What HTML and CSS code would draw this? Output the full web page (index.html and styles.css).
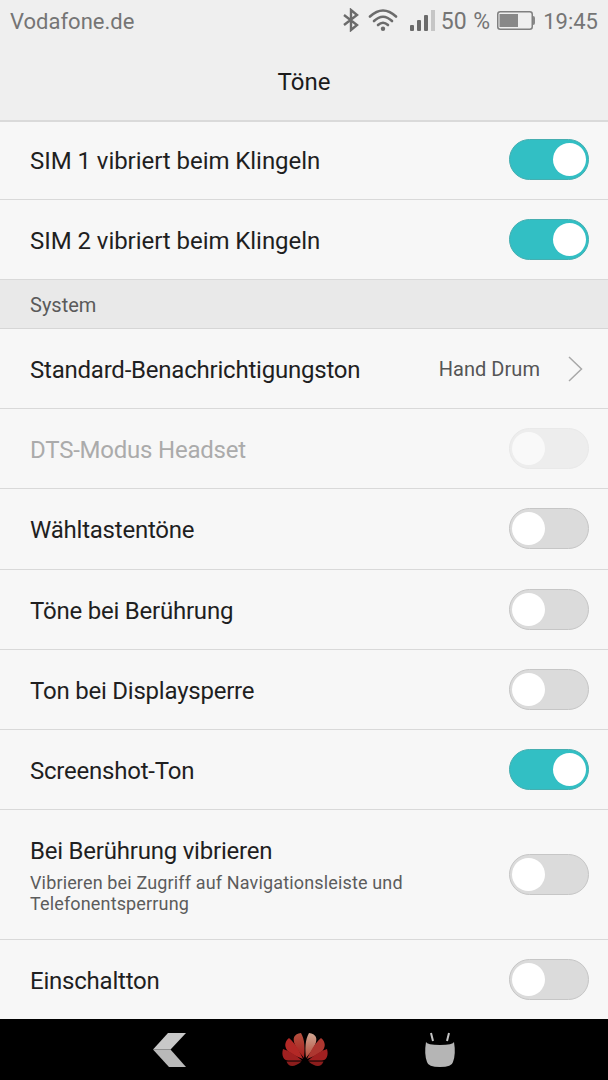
FILE: index.html
```html
<!DOCTYPE html>
<html lang="de">

<head>
    <meta charset="UTF-8">
    <title>Töne</title>
    <link rel="stylesheet" href="styles.css">
</head>

<body>
    <div id="phone">
        <div id="status">
            <span class="carrier">Vodafone.de</span>
            <svg class="bluetooth" width="18" height="24" viewBox="0 0 18 24">
                <path d="M2 7 L15 17 L9 22 V2 L15 7 L2 17" />
            </svg>
            <svg class="wifi" width="30" height="24" viewBox="0 0 30 24">
                <path d="M2 8.5 Q15 -3.5 28 8.5" />
                <path d="M6 13 Q15 4.5 24 13" />
                <path d="M10 17 Q15 12.5 20 17" />
                <circle cx="15" cy="20.7" r="2.2" />
            </svg>
            <svg class="signal" width="26" height="24" viewBox="0 0 26 24">
                <rect x="0" y="17" width="4" height="6" rx="1" />
                <rect x="7" y="12" width="4" height="11" rx="1" />
                <rect x="14" y="7" width="4" height="16" rx="1" />
                <rect class="weak" x="21" y="2" width="4" height="21" />
            </svg>
            <span class="percent">50 %</span>
            <svg class="battery" width="38" height="19" viewBox="0 0 38 19">
                <rect class="frame" x="0.75" y="0.75" width="34.5" height="17.5" rx="2.5" />
                <rect x="2.5" y="3" width="18.5" height="13" />
                <path d="M36 5 q2 0 2 2 v5 q0 2 -2 2z" />
            </svg>
            <span class="clock">19:45</span>
        </div>
        <div id="title">
            <h1>Töne</h1>
        </div>
        <ul id="list">
            <li class="row sim first"><span class="label">SIM 1 vibriert beim Klingeln</span><i class="switch on"></i></li>
            <li class="row sim"><span class="label">SIM 2 vibriert beim Klingeln</span><i class="switch on"></i></li>
            <li class="section">System</li>
            <li class="row">
                <span class="label">Standard-Benachrichtigungston</span>
                <span class="value">Hand Drum</span>
                <svg class="arrow" width="15" height="26" viewBox="0 0 15 26">
                    <path d="M1 1 L13.5 13 L1 25" />
                </svg>
            </li>
            <li class="row disabled"><span class="label">DTS-Modus Headset</span><i class="switch"></i></li>
            <li class="row tall"><span class="label">Wähltastentöne</span><i class="switch"></i></li>
            <li class="row"><span class="label">Töne bei Berührung</span><i class="switch"></i></li>
            <li class="row"><span class="label">Ton bei Displaysperre</span><i class="switch"></i></li>
            <li class="row"><span class="label">Screenshot-Ton</span><i class="switch on"></i></li>
            <li class="row double">
                <div class="label">
                    <div>Bei Berührung vibrieren</div>
                    <p>Vibrieren bei Zugriff auf Navigationsleiste und Telefonentsperrung</p>
                </div>
                <i class="switch"></i>
            </li>
            <li class="row last"><span class="label">Einschaltton</span><i class="switch"></i></li>
        </ul>
        <div id="nav">
            <svg width="36" height="36" viewBox="0 0 36 36">
                <path fill="#c8c8c8" d="M1 17.5 L16 1 H34 L18.500 17.500z" />
                <path fill="#b9b9b9" d="M1 17.500 H18.500 L34 35 H17z" />
            </svg>
            <svg class="home" width="48" height="36" viewBox="0 0 48 36">
                <defs>
                    <linearGradient id="red" x1="0" y1="0" x2="0" y2="1">
                        <stop offset="0" stop-color="#b5513f" />
                        <stop offset="1" stop-color="#a81c1c" />
                    </linearGradient>
                    <linearGradient id="light" x1="0" y1="0" x2="0" y2="1">
                        <stop offset="0" stop-color="#d0a692" />
                        <stop offset="1" stop-color="#b54d3c" />
                    </linearGradient>
                </defs>
                <path fill="url(#red)" d="M23 26 C24 17 24 8 20 1 C13 2 11 6 14 13 C16 18 20 22 23 26z" />
                <path fill="url(#light)" d="M25 26 C24 17 24 8 28 1 C35 2 37 6 34 13 C32 18 28 22 25 26z" />
                <path fill="#b32926" d="M22 27 C18 18 14 11 8 6 C3 10 3 16 8 20 C12 23 17 25 22 27z" />
                <path fill="#ad3730" d="M26 27 C30 18 34 11 40 6 C45 10 45 16 40 20 C36 23 31 25 26 27z" />
                <path fill="#a02020" d="M21 28.500 C15 23 8 19 2 17 C0 24 3 29 8 28.500z" />
                <path fill="#a02020" d="M27 28.500 C33 23 40 19 46 17 C48 24 45 29 40 28.500z" />
                <path fill="#8c1d1c" d="M20.500 29.500 H5.500 C8 36 14 35 20.500 29.500z" />
                <path fill="#8c1d1c" d="M27.500 29.500 H42.500 C40 36 34 35 27.500 29.500z" />
            </svg>
            <svg width="32" height="38" viewBox="0 0 32 38">
                <path stroke="#c4c4c4" stroke-width="2" d="M7 2 L9 10 M25 2 L23 10" />
                <path fill="#b5b5b5" d="M2 11 Q3 14 16 14 Q29 14 30 11 Q32 23 29 31 Q28 36 16 36 Q4 36 3 31 Q0 23 2 11z" />
            </svg>
        </div>
    </div>
</body>

</html>
```
FILE: styles.css
```css
body {
    margin: 0;
    padding: 0;
    background-color: #f7f7f7;
    font-family: Roboto, "Liberation Sans", sans-serif;
}

#phone {
    display: flex;
    flex-direction: column;
    width: 608px;
    height: 1080px;
    overflow: hidden;
}

#status {
    display: flex;
    align-items: center;
    height: 42px;
    padding: 0 10px;
    background-color: #efefef;
    color: #757575;
    font-size: 22px;
    white-space: nowrap;
}

#status svg {
    flex: none;
    fill: #6b6b6b;
    margin-top: -2px;
}

#status .carrier {
    flex: 1;
}

#status .bluetooth {
    fill: none;
    stroke: #6b6b6b;
    stroke-width: 2.4;
    margin-right: 8px;
}

#status .wifi {
    margin-right: 12px;
}

#status .wifi path {
    fill: none;
    stroke: #6b6b6b;
    stroke-width: 2.6;
    stroke-linecap: round;
}

#status .signal {
    margin-right: 5px;
}

#status .weak {
    fill: #c6c6c6;
}

#status .percent {
    margin-right: 7px;
    font-size: 23px;
    word-spacing: 1px;
}

#status .battery {
    fill: #888888;
    margin-right: 8px;
}

#status .frame {
    fill: none;
    stroke: #808080;
    stroke-width: 1.5;
}

#title {
    height: 78px;
    background-color: #efefef;
    border-bottom: 2px solid #dadada;
}

#title h1 {
    margin: 0;
    line-height: 81px;
    text-align: center;
    font-size: 24px;
    font-weight: normal;
    color: #1b1b1b;
}

#list {
    margin: 0;
    padding: 0;
    list-style: none;
}

.row {
    display: flex;
    align-items: center;
    box-sizing: border-box;
    height: 80px;
    padding: 0 19px 0 30px;
    border-bottom: 1px solid #d9d9d9;
    background-color: #f7f7f7;
    color: #1f1f1f;
    font-size: 24px;
    letter-spacing: -0.22px;
}

.row.sim {
    letter-spacing: -0.05px;
}

.row.first {
    height: 78px;
    padding-bottom: 2px;
}

.row.tall {
    height: 81px;
    padding-bottom: 1px;
}

.row.double {
    height: 130px;
}

.row.last {
    height: 79px;
    border-bottom: none;
}

.label {
    flex: 1;
    padding-top: 2px;
}

.label p {
    width: 400px;
    margin: 7px 0 0;
    font-size: 18px;
    line-height: 21px;
    letter-spacing: 0.15px;
    color: #5c5c5c;
}

.value {
    margin-right: 28px;
    padding-top: 1px;
    font-size: 20px;
    letter-spacing: 0.05px;
    color: #555555;
}

.arrow {
    margin-right: 6px;
    fill: none;
    stroke: #a8a8a8;
    stroke-width: 1.5;
}

.section {
    box-sizing: border-box;
    height: 49px;
    padding-left: 30px;
    border-bottom: 1px solid #d6d6d6;
    background-color: #e9e9e9;
    color: #5a5a5a;
    font-size: 20px;
    line-height: 51px;
}

.switch {
    box-sizing: border-box;
    width: 80px;
    height: 41px;
    padding: 3px 2px;
    border: 1px solid #c6c6c6;
    border-radius: 21px;
    background-color: #dbdbdb;
}

.switch:before {
    content: "";
    display: block;
    width: 33px;
    height: 33px;
    border-radius: 50%;
    background-color: #ffffff;
}

.switch.on {
    border-color: #46aeb0;
    background-color: #32bfc4;
}

.switch.on:before {
    margin-left: auto;
}

.disabled {
    color: #ababab;
}

.disabled .switch {
    border-color: #e9e9e9;
    background-color: #ededed;
}

.disabled .switch:before {
    background-color: #f9f9f9;
}

#nav {
    display: flex;
    align-items: center;
    justify-content: center;
    gap: 94px;
    flex: 1;
    background-color: #000000;
}

#nav .home {
    margin: 0 1px 0 -1px;
}
```
